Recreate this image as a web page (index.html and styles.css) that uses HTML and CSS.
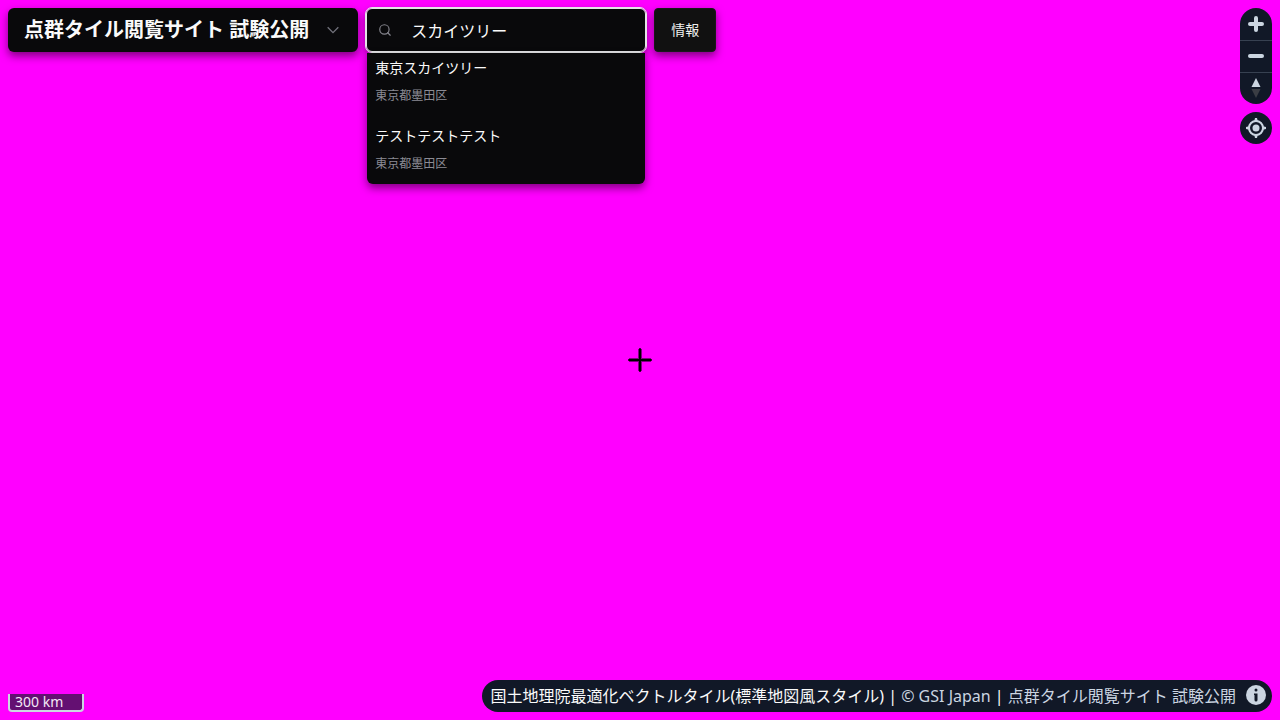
FILE: index.html
```
<!DOCTYPE html>
<html lang="ja">
<head>
<meta charset="utf-8">
<meta name="viewport" content="width=device-width, initial-scale=1">
<title>点群タイル閲覧サイト 試験公開</title>
<link rel="stylesheet" href="styles.css">
</head>
<body>
<main class="map">
  <div class="top">
    <header class="toolbar">
      <button class="title-button" type="button" aria-expanded="false">
        <span>点群タイル閲覧サイト 試験公開</span>
        <svg class="chevron" viewBox="0 0 24 24" aria-hidden="true"><path d="m4 8 8 8 8-8"/></svg>
      </button>
      <div class="search">
        <label class="search-box">
          <svg class="search-icon" viewBox="0 0 24 24" aria-hidden="true"><circle cx="11" cy="11" r="8"/><path d="m21 21-4.3-4.3"/></svg>
          <input class="search-input" type="text" value="スカイツリー" aria-label="検索">
        </label>
        <ul class="results">
          <li><button class="result" type="button"><span class="result-name">東京スカイツリー</span><span class="result-place">東京都墨田区</span></button></li>
          <li><button class="result" type="button"><span class="result-name">テストテストテスト</span><span class="result-place">東京都墨田区</span></button></li>
        </ul>
      </div>
      <button class="info-button" type="button">情報</button>
    </header>
    <div class="controls">
      <div class="control-group">
        <button class="control" type="button" aria-label="拡大"><svg viewBox="0 0 32 32"><path class="bar" d="M16 10v12M10 16h12"/></svg></button>
        <button class="control" type="button" aria-label="縮小"><svg viewBox="0 0 32 32"><path class="bar" d="M10 16h12"/></svg></button>
        <button class="control" type="button" aria-label="北を上にする"><svg viewBox="0 0 32 32"><path class="north" d="m11.5 15 4.5-9 4.5 9z"/><path class="south" d="m11.5 17 4.5 9 4.5-9z"/></svg></button>
      </div>
      <div class="control-group">
        <button class="control" type="button" aria-label="現在地"><svg viewBox="0 0 32 32"><circle class="ring" cx="16" cy="16" r="7"/><circle class="north" cx="16" cy="16" r="3.5"/><path class="north" d="M15 6h2l1 4h-4zM15 26h2l1-4h-4zM6 15v2l4 1v-4zM26 15v2l-4 1v-4z"/></svg></button>
      </div>
    </div>
  </div>
  <svg class="crosshair" viewBox="0 0 24 24" aria-hidden="true"><path class="cross-edge" d="M12 1v22M1 12h22"/><path class="cross-line" d="M12 1v22M1 12h22"/></svg>
  <footer class="bottom">
    <div class="scale">300 km</div>
    <div class="attribution">
      <span>国土地理院最適化ベクトルタイル(標準地図風スタイル) | <a href="#gsi">© GSI Japan</a> | <a href="#site">点群タイル閲覧サイト 試験公開</a></span>
      <button class="attribution-button" type="button" aria-label="帰属表示">
        <svg viewBox="0 0 20 20"><circle cx="10" cy="10" r="10"/><path d="M10 3.5a1.5 1.5 0 1 1 0 3 1.5 1.5 0 0 1 0-3ZM8 8.5h3.5v6.5a1.5 1.5 0 0 1-3 0v-5H8Z"/></svg>
      </button>
    </div>
  </footer>
</main>
</body>
</html>
```
FILE: styles.css
```
* {
  box-sizing: border-box;
}

body {
  margin: 0;
  font-family: "Noto Sans", "Noto Sans CJK JP", sans-serif;
  color: #fafafa;
}

button {
  margin: 0;
  padding: 0;
  border: 0;
  background: none;
  color: inherit;
  font: inherit;
  cursor: pointer;
}

.map {
  position: relative;
  display: flex;
  flex-direction: column;
  justify-content: space-between;
  min-height: 100vh;
  padding: 8px;
  background: #ff00ff;
}

.top {
  display: flex;
  justify-content: space-between;
  align-items: flex-start;
}

.toolbar {
  display: flex;
  gap: 8px;
}

.title-button,
.search-box,
.results,
.info-button {
  border-radius: 6px;
  background: #09090b;
  box-shadow: 0 4px 8px rgba(0, 0, 0, 0.5);
}

.title-button {
  display: flex;
  align-items: center;
  gap: 16px;
  height: 44px;
  padding: 0 17px 0 16px;
  font-size: 20px;
  font-weight: 600;
  line-height: 28px;
  white-space: nowrap;
}

.chevron {
  width: 16px;
  height: 16px;
  fill: none;
  stroke: #71717a;
  stroke-width: 2;
}

.search {
  position: relative;
  width: 280px;
}

.search-box {
  display: flex;
  align-items: center;
  gap: 19px;
  height: 44px;
  padding: 0 11px;
  border: 1px solid #e4e4e7;
  outline: 1px solid #e4e4e7;
}

.search-icon {
  flex: none;
  width: 14px;
  height: 14px;
  fill: none;
  stroke: #85858d;
  stroke-width: 2;
  stroke-linecap: round;
}

.search-input {
  flex: 1;
  min-width: 0;
  height: 24px;
  padding: 0;
  border: 0;
  outline: 0;
  background: transparent;
  color: #fafafa;
  font: inherit;
  font-size: 16px;
}

.results {
  position: absolute;
  top: 45px;
  left: 1px;
  right: 1px;
  margin: 0;
  padding: 5px 0 0;
  border-radius: 0 0 6px 6px;
  list-style: none;
}

.result {
  display: flex;
  flex-direction: column;
  gap: 10px;
  width: 100%;
  padding: 0 8px 12px;
  text-align: left;
}

.result-name {
  font-size: 14px;
  line-height: 20px;
}

.results li + li {
  padding-top: 10px;
}

.result-place {
  color: #8b8b94;
  font-size: 12px;
  line-height: 16px;
}

.info-button {
  height: 44px;
  padding: 0 16px 2px;
  border: 1px solid #18181a;
  border-radius: 4px;
  background: #111111;
  color: #eeeeee;
  font-size: 14px;
}

.controls {
  display: flex;
  flex-direction: column;
  gap: 8px;
}

.control-group {
  overflow: hidden;
  border-radius: 16px;
  background: #111827;
}

.control {
  display: block;
  width: 32px;
  height: 32px;
}

.control + .control {
  border-top: 1px solid #374151;
}

.control svg {
  display: block;
  width: 32px;
  height: 32px;
}

.control + .control svg {
  margin-top: -1px;
}

.bar {
  stroke: #cbd5e1;
  stroke-width: 4;
  stroke-linecap: round;
}

.north {
  fill: #cbd5e1;
}

.south {
  fill: #3a3d44;
}

.ring {
  fill: none;
  stroke: #cbd5e1;
  stroke-width: 2;
}

.crosshair {
  position: absolute;
  top: 50%;
  left: 50%;
  width: 24px;
  height: 24px;
  transform: translate(-50%, -50%);
}

.cross-edge {
  stroke: #000000;
  stroke-opacity: 0.5;
  stroke-width: 4;
}

.cross-line {
  stroke: #000000;
  stroke-width: 2;
  stroke-linecap: round;
}

.bottom {
  display: flex;
  justify-content: space-between;
  align-items: flex-end;
}

.scale {
  width: 76px;
  height: 18px;
  padding: 0 5px;
  border: 2px solid #cbd5e1;
  border-top: 0;
  border-radius: 0 0 4px 4px;
  background: rgba(17, 24, 39, 0.65);
  color: #f3e8f5;
  font-size: 14px;
  line-height: 16px;
}

.attribution {
  display: flex;
  align-items: center;
  gap: 10px;
  height: 32px;
  padding: 0 6px 0 8px;
  border-radius: 16px;
  background: #111827;
  font-size: 16px;
  line-height: 24px;
  white-space: nowrap;
}

.attribution a {
  color: #cbd5e1;
  text-decoration: none;
}

.attribution-button svg {
  display: block;
  width: 20px;
  height: 20px;
}

.attribution-button {
  align-self: flex-start;
  margin-top: 5px;
}

.attribution-button circle {
  fill: #cbd5e1;
}

.attribution-button path {
  fill: #111827;
}
```
